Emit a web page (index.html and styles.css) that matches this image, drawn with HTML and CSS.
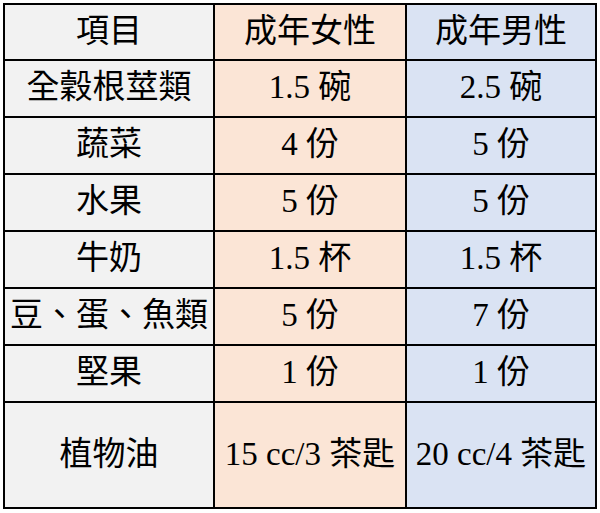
FILE: index.html
```html
<!DOCTYPE html>
<html lang="zh-Hant">
<head>
<meta charset="utf-8">
<link rel="stylesheet" href="styles.css">
</head>
<body>
<div class="table">
  <div class="cell c1">項目</div><div class="cell c2">成年女性</div><div class="cell c3">成年男性</div>
  <div class="cell c1">全穀根莖類</div><div class="cell c2">1.5 碗</div><div class="cell c3">2.5 碗</div>
  <div class="cell c1">蔬菜</div><div class="cell c2">4 份</div><div class="cell c3">5 份</div>
  <div class="cell c1">水果</div><div class="cell c2">5 份</div><div class="cell c3">5 份</div>
  <div class="cell c1">牛奶</div><div class="cell c2">1.5 杯</div><div class="cell c3">1.5 杯</div>
  <div class="cell c1">豆、蛋、魚類</div><div class="cell c2">5 份</div><div class="cell c3">7 份</div>
  <div class="cell c1">堅果</div><div class="cell c2">1 份</div><div class="cell c3">1 份</div>
  <div class="cell c1">植物油</div><div class="cell c2">15 cc/3 茶匙</div><div class="cell c3">20 cc/4 茶匙</div>
</div>
</body>
</html>
```
FILE: styles.css
```css
html, body {
  margin: 0;
  padding: 0;
  background: #ffffff;
}
body {
  padding: 3px;
}
.table {
  width: 594px;
  box-sizing: border-box;
  display: grid;
  grid-template-columns: 208px 190px 188px;
  grid-template-rows: 54px repeat(6, 55px) 104px;
  gap: 2px;
  padding: 2px;
  background: #000000;
  font-family: "Liberation Serif", "Noto Sans CJK TC", serif;
  font-size: 33px;
  color: #000000;
}
.cell {
  display: flex;
  align-items: center;
  justify-content: center;
  white-space: nowrap;
  line-height: 1;
  padding-bottom: 2px;
}
.c1 { background: #f2f2f2; }
.c2 { background: #fbe5d6; }
.c3 { background: #dae3f3; }
```
